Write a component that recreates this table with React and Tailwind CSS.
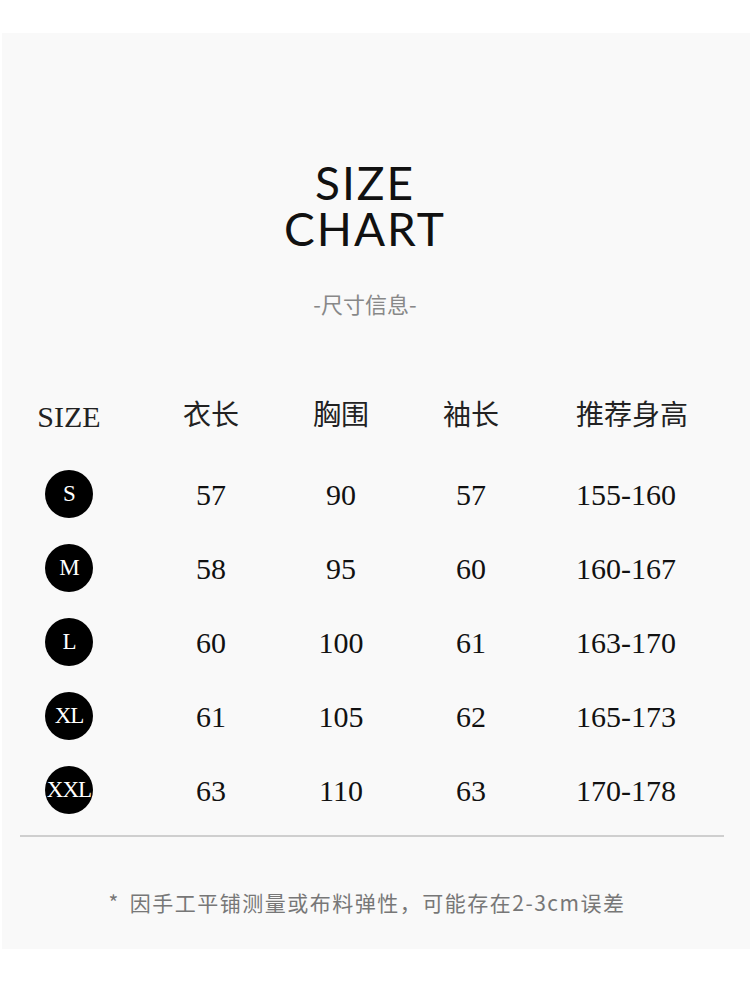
import React from 'react';

const rows = [
  { size: 'S', len: '57', chest: '90', sleeve: '57', height: '155-160' },
  { size: 'M', len: '58', chest: '95', sleeve: '60', height: '160-167' },
  { size: 'L', len: '60', chest: '100', sleeve: '61', height: '163-170' },
  { size: 'XL', len: '61', chest: '105', sleeve: '62', height: '165-173' },
  { size: 'XXL', len: '63', chest: '110', sleeve: '63', height: '170-178' },
];

const serif = "font-['Liberation_Serif','Noto_Sans_CJK_SC',serif]";
const cols = 'grid grid-cols-[136px_146px_114px_146px_172px] text-center';

function App() {
  return (
    <div className="w-[750px] h-[1002px] bg-white pt-[33px]">
      <div className="ml-[2px] h-[916px] bg-[#f9f9f9] flex flex-col">
        <div className="mt-[127px] pr-[22px] flex flex-col items-center text-[#111] font-['Lato',sans-serif] font-normal leading-[46px]">
          <div className="text-[46px] tracking-[2px]">SIZE</div>
          <div className="text-[46px] tracking-[2px]">CHART</div>
        </div>
        <div className="mt-[35px] pr-[22px] text-center text-[22px] text-[#888] font-['Noto_Sans_CJK_SC',sans-serif]">
          -尺寸信息-
        </div>

        <div className={`mt-[73px] ${cols} ${serif} text-[#222] h-[46px] items-center`}>
          <div className="text-[30px] pr-[2px]">SIZE</div>
          <div className="text-[28px]">衣长</div>
          <div className="text-[28px]">胸围</div>
          <div className="text-[28px]">袖长</div>
          <div className="text-[28px] text-left pl-[32px]">推荐身高</div>
        </div>

        <div className="mt-[18px] flex flex-col">
          {rows.map((r) => (
            <div key={r.size} className={`${cols} ${serif} text-[30px] text-[#111] h-[74px] items-center`}>
              <div className="flex justify-center pr-[2px]">
                <div className="w-[48px] h-[48px] rounded-full bg-black text-white flex items-center justify-center text-[23px] overflow-hidden tracking-[-1px]">
                  {r.size}
                </div>
              </div>
              <div>{r.len}</div>
              <div>{r.chest}</div>
              <div>{r.sleeve}</div>
              <div className="text-left pl-[32px]">{r.height}</div>
            </div>
          ))}
        </div>

        <div className="mt-[8px] ml-[18px] mr-[26px] border-t-2 border-[#cfcfcf]"></div>

        <div className="mt-[50px] pr-[18px] text-center text-[21px] text-[#777] font-['Noto_Sans_CJK_SC',sans-serif] tracking-[1.5px]">
          <span className="mr-[10px]">*</span>因手工平铺测量或布料弹性，可能存在2-3cm误差
        </div>
      </div>
    </div>
  );
}

export default App;
